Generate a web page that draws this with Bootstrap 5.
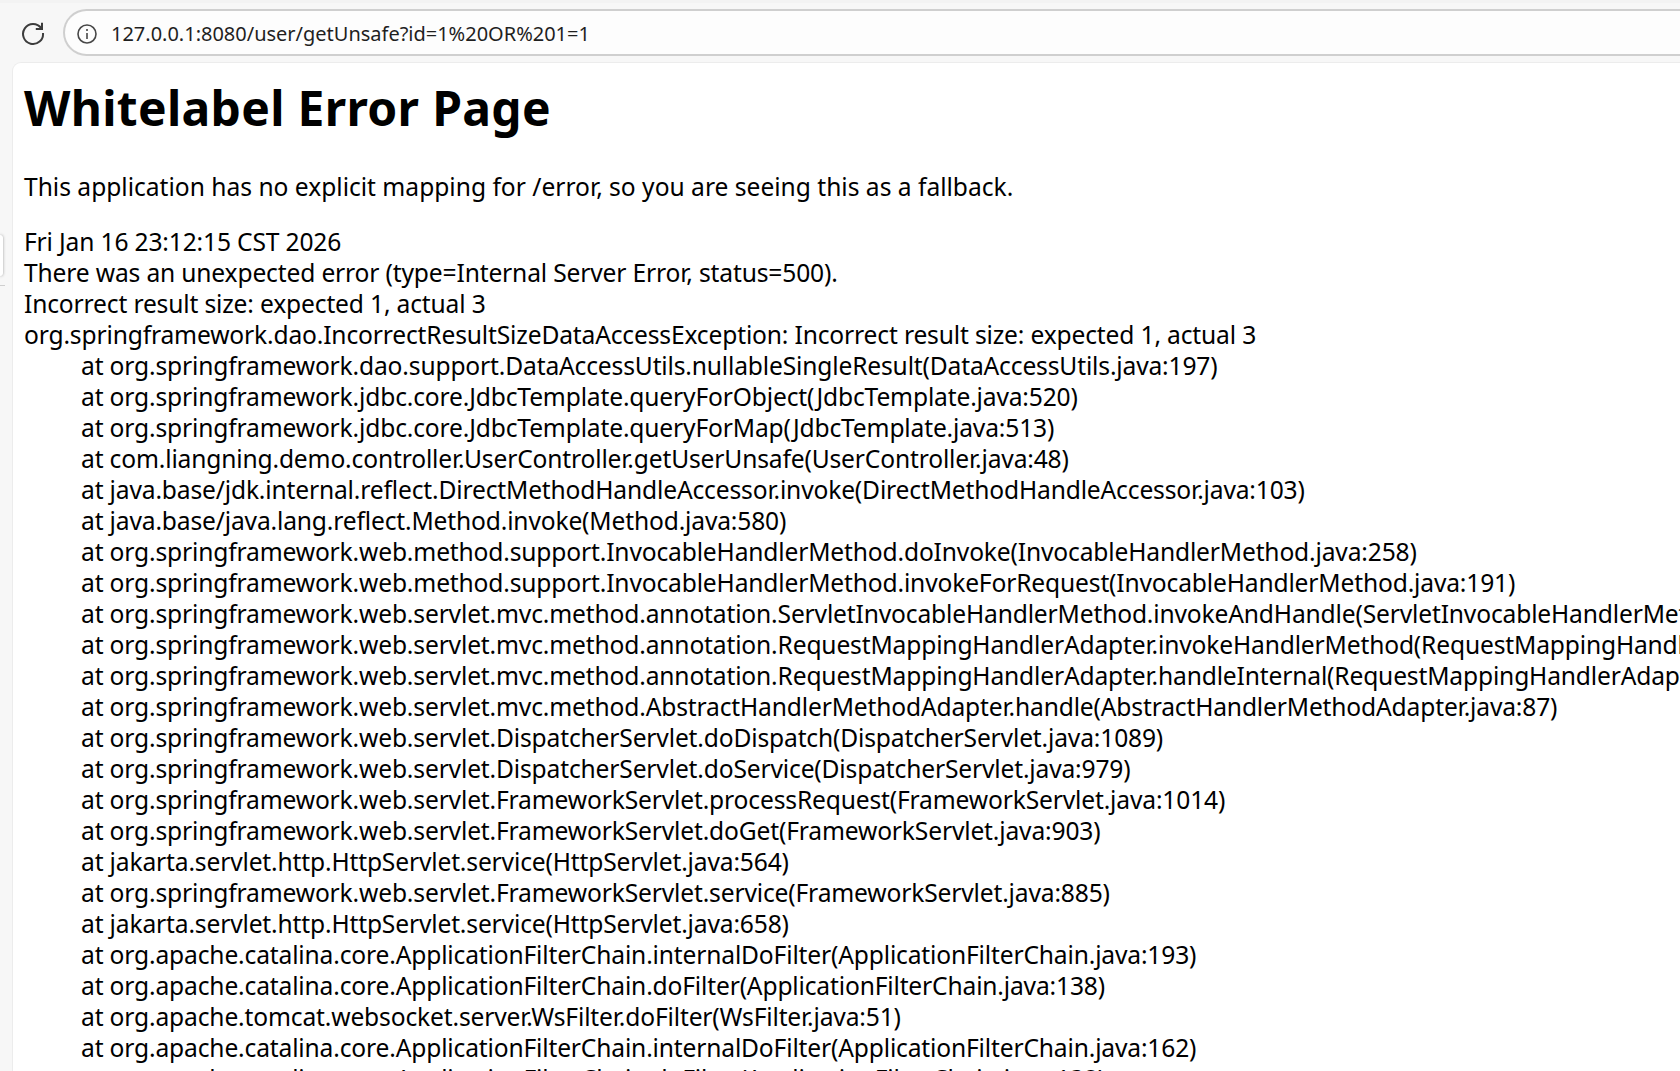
<!DOCTYPE html>
<html lang="en">
<head>
<meta charset="utf-8">
<title>Whitelabel Error Page</title>
<link href="https://cdn.jsdelivr.net/npm/bootstrap@5.3.0/dist/css/bootstrap.min.css" rel="stylesheet">
<style>
html,body{height:100%;overflow:hidden;}
body{background:#f7f7f7;font-family:"Noto Sans","Liberation Sans",sans-serif;color:#000;}
.chrome-strip{height:3px;background:#f3f3f3;}
.tool-bar{height:59px;padding:6px 0 6px 0;}
.reload-wrap{width:63px;flex:none;padding-left:20px;}
.addr-box{height:47px;background:#fdfdfd;border:2px solid #cfcfcf;border-right:0;border-radius:24px 0 0 24px;padding:2px 0 0 11px;gap:13px;font-size:20px;color:#1f1f1f;letter-spacing:-.01px;}
.doc-sheet{background:#fff;margin-left:12px;height:1009px;border-radius:9px 0 0 0;border-top:1px solid #ececec;border-left:1px solid #ececec;padding:0 0 0 11px;overflow:hidden;white-space:nowrap;}
.doc-title{font-size:48px;font-weight:700;line-height:64px;margin:13px 0 30px;letter-spacing:.3px;}
.doc-lead{font-size:24.6px;line-height:33px;margin:0 0 23px;letter-spacing:-.01px;}
.err-lines{font-size:24.6px;line-height:31px;letter-spacing:-.16px;}
.stack-line{padding-left:57px;letter-spacing:-.16px;}
.side-tab{position:absolute;left:0;top:235px;width:3px;height:41px;background:#fff;border-radius:0 4px 4px 0;box-shadow:0 0 3px #999;}
.side-line{position:absolute;left:0;top:285px;width:5px;height:1px;background:#cfcfcf;}
</style>
</head>
<body>
<div class="chrome-strip"></div>
<div class="tool-bar d-flex align-items-stretch">
  <div class="reload-wrap d-flex align-items-center">
    <svg width="26" height="26" viewBox="0 0 26 26" fill="none" stroke="#3c3c3c" stroke-width="2" aria-hidden="true">
      <path d="M21.2 8.2A10 10 0 1 0 23 13"/>
      <path d="M22 2.8V9h-6.2" stroke-linejoin="miter"/>
    </svg>
  </div>
  <div class="addr-box flex-grow-1 d-flex align-items-center">
    <svg width="22" height="22" viewBox="0 0 22 22" fill="none" stroke="#474747" stroke-width="1.6" aria-hidden="true">
      <circle cx="11" cy="11" r="9"/>
      <path d="M11 10v6M11 6v2"/>
    </svg>
    <span>127.0.0.1:8080/user/getUnsafe?id=1%20OR%201=1</span>
  </div>
</div>
<div class="side-tab"></div>
<div class="side-line"></div>
<main class="doc-sheet">
  <h1 class="doc-title">Whitelabel Error Page</h1>
  <p class="doc-lead">This application has no explicit mapping for /error, so you are seeing this as a fallback.</p>
  <div class="err-lines">
    <div>Fri Jan 16 23:12:15 CST 2026</div>
    <div>There was an unexpected error (type=Internal Server Error, status=500).</div>
    <div>Incorrect result size: expected 1, actual 3</div>
    <div>org.springframework.dao.IncorrectResultSizeDataAccessException: Incorrect result size: expected 1, actual 3</div>
    <div class="stack-line">at org.springframework.dao.support.DataAccessUtils.nullableSingleResult(DataAccessUtils.java:197)</div>
    <div class="stack-line">at org.springframework.jdbc.core.JdbcTemplate.queryForObject(JdbcTemplate.java:520)</div>
    <div class="stack-line">at org.springframework.jdbc.core.JdbcTemplate.queryForMap(JdbcTemplate.java:513)</div>
    <div class="stack-line">at com.liangning.demo.controller.UserController.getUserUnsafe(UserController.java:48)</div>
    <div class="stack-line">at java.base/jdk.internal.reflect.DirectMethodHandleAccessor.invoke(DirectMethodHandleAccessor.java:103)</div>
    <div class="stack-line">at java.base/java.lang.reflect.Method.invoke(Method.java:580)</div>
    <div class="stack-line">at org.springframework.web.method.support.InvocableHandlerMethod.doInvoke(InvocableHandlerMethod.java:258)</div>
    <div class="stack-line">at org.springframework.web.method.support.InvocableHandlerMethod.invokeForRequest(InvocableHandlerMethod.java:191)</div>
    <div class="stack-line">at org.springframework.web.servlet.mvc.method.annotation.ServletInvocableHandlerMethod.invokeAndHandle(ServletInvocableHandlerMethod.java:118)</div>
    <div class="stack-line">at org.springframework.web.servlet.mvc.method.annotation.RequestMappingHandlerAdapter.invokeHandlerMethod(RequestMappingHandlerAdapter.java:986)</div>
    <div class="stack-line">at org.springframework.web.servlet.mvc.method.annotation.RequestMappingHandlerAdapter.handleInternal(RequestMappingHandlerAdapter.java:891)</div>
    <div class="stack-line">at org.springframework.web.servlet.mvc.method.AbstractHandlerMethodAdapter.handle(AbstractHandlerMethodAdapter.java:87)</div>
    <div class="stack-line">at org.springframework.web.servlet.DispatcherServlet.doDispatch(DispatcherServlet.java:1089)</div>
    <div class="stack-line">at org.springframework.web.servlet.DispatcherServlet.doService(DispatcherServlet.java:979)</div>
    <div class="stack-line">at org.springframework.web.servlet.FrameworkServlet.processRequest(FrameworkServlet.java:1014)</div>
    <div class="stack-line">at org.springframework.web.servlet.FrameworkServlet.doGet(FrameworkServlet.java:903)</div>
    <div class="stack-line">at jakarta.servlet.http.HttpServlet.service(HttpServlet.java:564)</div>
    <div class="stack-line">at org.springframework.web.servlet.FrameworkServlet.service(FrameworkServlet.java:885)</div>
    <div class="stack-line">at jakarta.servlet.http.HttpServlet.service(HttpServlet.java:658)</div>
    <div class="stack-line">at org.apache.catalina.core.ApplicationFilterChain.internalDoFilter(ApplicationFilterChain.java:193)</div>
    <div class="stack-line">at org.apache.catalina.core.ApplicationFilterChain.doFilter(ApplicationFilterChain.java:138)</div>
    <div class="stack-line">at org.apache.tomcat.websocket.server.WsFilter.doFilter(WsFilter.java:51)</div>
    <div class="stack-line">at org.apache.catalina.core.ApplicationFilterChain.internalDoFilter(ApplicationFilterChain.java:162)</div>
    <div class="stack-line">at org.apache.catalina.core.ApplicationFilterChain.doFilter(ApplicationFilterChain.java:138)</div>
  </div>
</main>
<script src="https://cdn.jsdelivr.net/npm/bootstrap@5.3.0/dist/js/bootstrap.bundle.min.js"></script>
</body>
</html>
